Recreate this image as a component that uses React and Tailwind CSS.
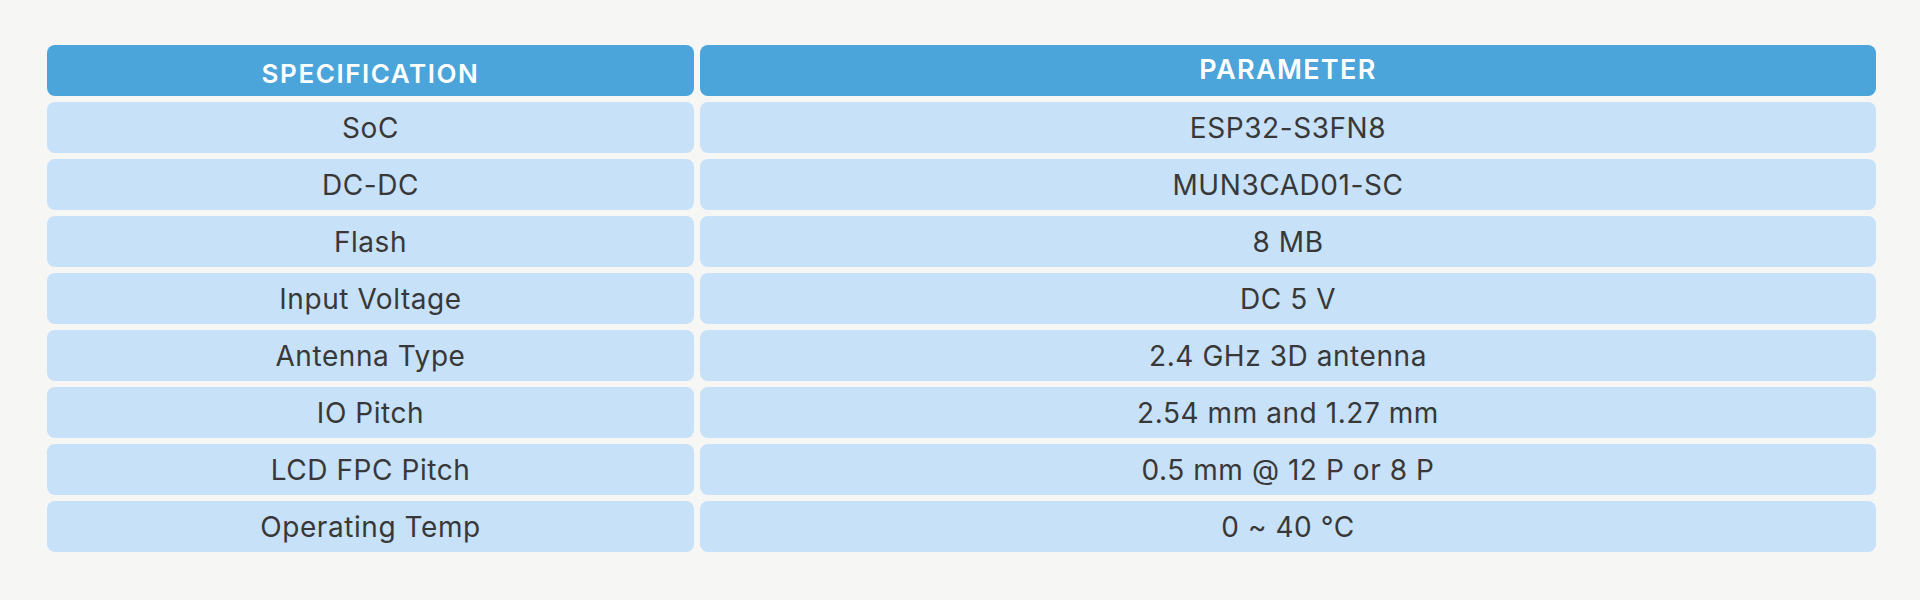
import React from "react";

const specs = [
  ["SoC", "ESP32-S3FN8"],
  ["DC-DC", "MUN3CAD01-SC"],
  ["Flash", "8 MB"],
  ["Input Voltage", "DC 5 V"],
  ["Antenna Type", "2.4 GHz 3D antenna"],
  ["IO Pitch", "2.54 mm and 1.27 mm"],
  ["LCD FPC Pitch", "0.5 mm @ 12 P or 8 P"],
  ["Operating Temp", "0 ~ 40 °C"],
];

function App() {
  return (
    <div
      className="w-[1920px] h-[600px] bg-[#f6f6f5] pt-[45px] pl-[47px]"
      style={{ fontFamily: "Inter, 'Open Sans', sans-serif" }}
    >
      <div className="grid grid-cols-[647px_1176px] gap-x-[6px] gap-y-[6px]">
        {/* header */}
        <div className="h-[51px] rounded-lg bg-[#4ba4da] flex items-center justify-center pt-[6px]">
          <span className="text-white text-[26px] font-semibold tracking-[0.06em]">SPECIFICATION</span>
        </div>
        <div className="h-[51px] rounded-lg bg-[#4ba4da] flex items-center justify-center">
          <span className="text-white text-[27px] font-semibold tracking-[0.05em]">PARAMETER</span>
        </div>

        {/* rows */}
        {specs.map(([name, value]) => (
          <React.Fragment key={name}>
            <div className="h-[51px] rounded-lg bg-[#c7e1f8] flex items-center justify-center">
              <span className="text-[#383838] text-[28px] tracking-[0.02em]">{name}</span>
            </div>
            <div className="h-[51px] rounded-lg bg-[#c7e1f8] flex items-center justify-center">
              <span className="text-[#383838] text-[28px] tracking-[0.02em]">{value}</span>
            </div>
          </React.Fragment>
        ))}
      </div>
    </div>
  );
}

export default App;
